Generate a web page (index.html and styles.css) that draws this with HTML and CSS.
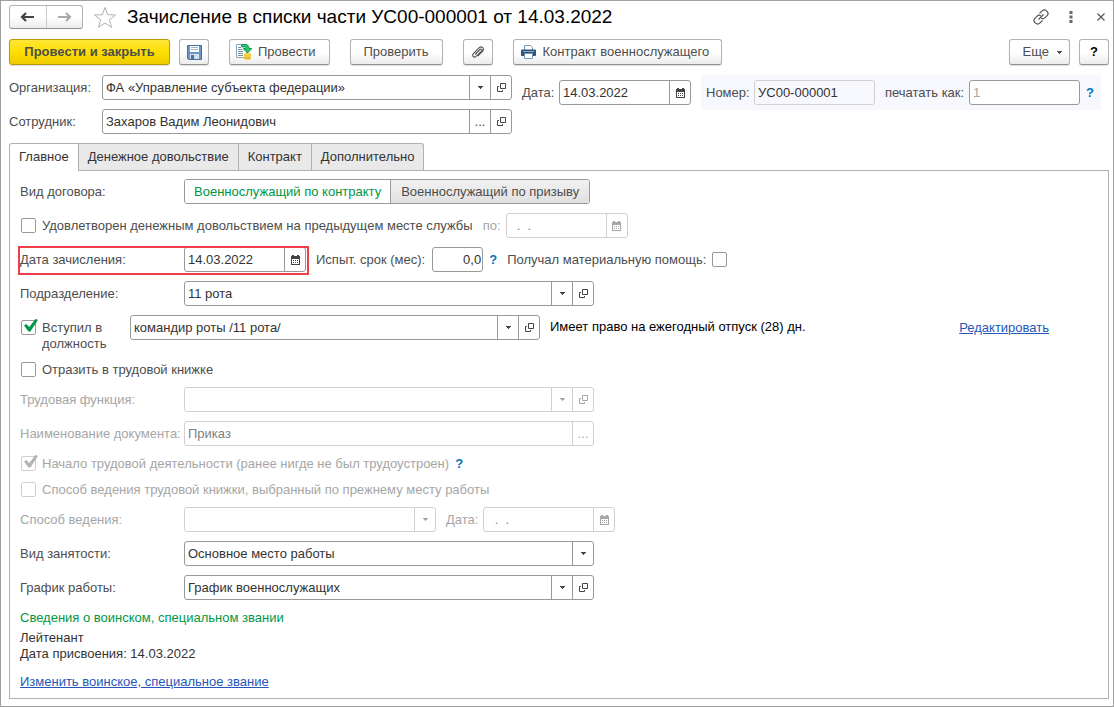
FILE: index.html
```html
<!DOCTYPE html>
<html lang="ru">
<head>
<meta charset="utf-8">
<title>Зачисление в списки части</title>
<link rel="stylesheet" href="styles.css">
</head>
<body>
<svg class="defs" aria-hidden="true">
  <symbol id="i-arrow" viewBox="0 0 5 3"><path d="M0 0h5v1H4v1H3v1H2V2H1V1H0z" fill="currentColor"/></symbol>
  <symbol id="i-open" viewBox="0 0 9 9"><path d="M3.500.5h5v5h-5zM2 3.500H.5v5h5V7" fill="none" stroke="currentColor"/></symbol>
  <symbol id="i-cal" viewBox="0 0 9 10"><path d="M1 0h2v1h3V0h2v1h1v9H0V1h1zM1 4v5h7V4z" fill="currentColor" fill-rule="evenodd"/><path d="M2 5h1v1H2zM4 5h1v1H4zM6 5h1v1H6zM2 7h1v1H2zM4 7h1v1H4zM6 7h1v1H6z" fill="currentColor"/></symbol>
</svg>
<main class="window">
  <header class="titlebar">
    <div class="nav">
      <button class="nav-btn" aria-label="Назад"><svg width="15" height="10" viewBox="0 0 15 10"><path d="M2 5h12M6 1L2 5l4 4" fill="none" stroke="currentColor" stroke-width="2.200"/></svg></button>
      <button class="nav-btn nav-off" aria-label="Вперед" disabled><svg width="15" height="10" viewBox="0 0 15 10"><path d="M1 5h12M9 1l4 4-4 4" fill="none" stroke="currentColor" stroke-width="2.200"/></svg></button>
    </div>
    <button class="icon-btn star" aria-label="В избранное"><svg width="24" height="23" viewBox="0 0 24 23"><path d="M12 1.500l2.700 7.200 7.800.3-6.100 4.800 2.100 7.500L12 17l-6.500 4.300 2.100-7.500L1.500 9l7.800-.3z" fill="#fff" stroke="#a9b1b8"/></svg></button>
    <h1 class="title">Зачисление в списки части УС00-000001 от 14.03.2022</h1>
    <div class="win-tools">
      <button class="icon-btn" aria-label="Ссылка"><svg width="16" height="16" viewBox="0 0 16 16"><path d="M6.500 4.500l2.700-2.700a2.900 2.900 0 0 1 4.200 0l.7.7a2.900 2.900 0 0 1 0 4.100l-2.300 2.300a2.700 2.700 0 0 1-3.500.3M9.500 11.500l-2.700 2.700a2.900 2.900 0 0 1-4.200 0l-.7-.7a2.900 2.900 0 0 1 0-4.100l2.300-2.300a2.700 2.700 0 0 1 3.500-.3M5.500 10.500l5-5" fill="none" stroke="#555" stroke-width="1.200"/></svg></button>
      <button class="icon-btn" aria-label="Меню"><svg width="4" height="12" viewBox="0 0 4 12"><path d="M.5 0h3v3h-3zM.5 4.500h3v3h-3zM.5 9h3v3h-3z" fill="#666"/></svg></button>
      <button class="icon-btn" aria-label="Закрыть"><svg width="8" height="8" viewBox="0 0 8 8"><path d="M.5.5l7 7M7.500.5l-7 7" stroke="#555" stroke-width="1.200"/></svg></button>
    </div>
  </header>

  <div class="toolbar">
    <div class="group">
      <button class="btn primary">Провести и закрыть</button>
      <button class="btn square" aria-label="Записать"><svg width="15" height="15" viewBox="0 0 15 15"><path d="M.5.5h14v14h-13l-1-1z" fill="#6797cc" stroke="#466f9d"/><path d="M3 1h9v6H3z" fill="#fff"/><path d="M4 2.500h7M4 4.500h7" stroke="#a5b1be"/><path d="M3 9h9v5H3z" fill="#d5dde6"/><path d="M4 10h3v4H4z" fill="#466f9d"/></svg></button>
    </div>
    <button class="btn post"><svg width="16" height="16" viewBox="0 0 16 16"><path d="M.5.5h10v13H.5z" fill="#fff" stroke="#8ba3b5"/><path d="M2 3.500h3M2 5.500h4M2 7.500h5M2 9.500h5M2 11.500h5" stroke="#6f8fa6"/><path d="M8 10v4c0 2 7 2 7 0v-4z" fill="#e8b21c"/><path d="M8 12c0 1.500 7 1.500 7 0" fill="none" stroke="#fbe48c"/><ellipse cx="11.500" cy="10.200" rx="3.500" ry="1.500" fill="#f7d24a"/><path d="M5.500.5h3.500c3 0 4 1.500 4 4H16L11.500 9 7 4.500h3c0-1-.4-1.500-1.500-1.500h-3z" fill="#27c46f" stroke="#0b8b48" stroke-width=".8"/></svg>Провести</button>
    <button class="btn">Проверить</button>
    <button class="btn square" aria-label="Файлы"><svg width="14" height="14" viewBox="0 0 14 14"><path d="M4 9.500l5-5c1.300-1.200 2.800.3 1.500 1.600l-5.400 5.300c-2 2-4.800-.8-2.800-2.800L8 2.900c2.700-2.600 6.200.8 3.500 3.500l-4.800 4.800" fill="none" stroke="#555" stroke-width="1.100"/></svg></button>
    <button class="btn print"><svg width="15" height="14" viewBox="0 0 15 14"><path d="M3.500 5V.5h6l2 2V5" fill="#fff" stroke="#7898b3"/><path d="M1 4.500h13q1 0 1 1V10q0 1-1 1H1q-1 0-1-1V5.500q0-1 1-1z" fill="#2c5479"/><path d="M3.500 8.500h8v5h-8z" fill="#fff" stroke="#7898b3"/><path d="M2 6.500h11" stroke="#8bacc8"/></svg>Контракт военнослужащего</button>
    <div class="group push">
      <button class="btn more">Еще<svg width="5" height="3"><use href="#i-arrow"/></svg></button>
      <button class="btn square help">?</button>
    </div>
  </div>

  <section class="head">
    <div class="head-main">
      <div class="row">
        <label class="label" for="org">Организация:</label>
        <div class="field wide"><input id="org" type="text" value="ФА «Управление субъекта федерации»"><button aria-label="Выбрать"><svg class="arr"><use href="#i-arrow"/></svg></button><button aria-label="Открыть"><svg class="ico"><use href="#i-open"/></svg></button></div>
      </div>
      <div class="row">
        <label class="label" for="emp">Сотрудник:</label>
        <div class="field wide"><input id="emp" type="text" value="Захаров Вадим Леонидович"><button aria-label="Выбрать">...</button><button aria-label="Открыть"><svg class="ico"><use href="#i-open"/></svg></button></div>
      </div>
    </div>
    <div class="head-date">
      <label for="date">Дата:</label>
      <div class="field date"><input id="date" type="text" value="14.03.2022"><button aria-label="Календарь"><svg class="cal"><use href="#i-cal"/></svg></button></div>
    </div>
    <div class="number">
      <label class="num-label" for="num">Номер:</label>
      <div class="field num readonly"><input id="num" type="text" value="УС00-000001" readonly></div>
      <label class="as-label" for="as">печатать как:</label>
      <div class="field as"><input id="as" type="text" placeholder="1"></div>
      <button class="hint" aria-label="Справка">?</button>
    </div>
  </section>

  <nav class="tabs" role="tablist">
    <button class="tab active" role="tab" aria-selected="true">Главное</button>
    <button class="tab" role="tab">Денежное довольствие</button>
    <button class="tab" role="tab">Контракт</button>
    <button class="tab" role="tab">Дополнительно</button>
  </nav>

  <section class="panel">
    <div class="row">
      <span class="label">Вид договора:</span>
      <div class="segment" role="radiogroup" aria-label="Вид договора">
        <label class="seg"><input type="radio" name="kind" checked><span>Военнослужащий по контракту</span></label>
        <label class="seg"><input type="radio" name="kind"><span>Военнослужащий по призыву</span></label>
      </div>
    </div>
    <div class="row">
      <label class="check"><input type="checkbox"><span>Удовлетворен денежным довольствием на предыдущем месте службы</span></label>
      <label class="off till-label" for="till">по:</label>
      <div class="field date-s disabled"><input id="till" type="text" value="  .  ." disabled><button aria-label="Календарь" disabled><svg class="cal"><use href="#i-cal"/></svg></button></div>
    </div>
    <div class="row">
      <div class="marked">
        <label class="label" for="enroll">Дата зачисления:</label>
        <div class="field date-s"><input id="enroll" type="text" value="14.03.2022"><button aria-label="Календарь"><svg class="cal"><use href="#i-cal"/></svg></button></div>
      </div>
      <label class="trial-label" for="trial">Испыт. срок (мес):</label>
      <div class="field trial"><input id="trial" type="text" value="0,0"></div>
      <button class="hint" aria-label="Справка">?</button>
      <label class="check reverse"><span>Получал материальную помощь:</span><input type="checkbox"></label>
    </div>
    <div class="row">
      <label class="label" for="dep">Подразделение:</label>
      <div class="field wide"><input id="dep" type="text" value="11 рота"><button aria-label="Выбрать"><svg class="arr"><use href="#i-arrow"/></svg></button><button aria-label="Открыть"><svg class="ico"><use href="#i-open"/></svg></button></div>
    </div>
    <div class="row top">
      <label class="check position"><input type="checkbox" checked><span>Вступил в должность</span></label>
      <div class="field wide"><input type="text" aria-label="Должность" value="командир роты /11 рота/"><button aria-label="Выбрать"><svg class="arr"><use href="#i-arrow"/></svg></button><button aria-label="Открыть"><svg class="ico"><use href="#i-open"/></svg></button></div>
      <p class="vacation">Имеет право на ежегодный отпуск (28) дн.</p>
      <a class="link edit" href="#">Редактировать</a>
    </div>
    <div class="row short">
      <label class="check"><input type="checkbox"><span>Отразить в трудовой книжке</span></label>
    </div>
    <div class="row">
      <label class="label off" for="func">Трудовая функция:</label>
      <div class="field wide disabled"><input id="func" type="text" disabled><button aria-label="Выбрать" disabled><svg class="arr"><use href="#i-arrow"/></svg></button><button aria-label="Открыть" disabled><svg class="ico"><use href="#i-open"/></svg></button></div>
    </div>
    <div class="row">
      <label class="label off" for="doc">Наименование документа:</label>
      <div class="field wide disabled"><input id="doc" type="text" value="Приказ" disabled><button aria-label="Выбрать" disabled>...</button></div>
    </div>
    <div class="row short">
      <label class="check off"><input type="checkbox" checked disabled><span>Начало трудовой деятельности (ранее нигде не был трудоустроен)</span></label>
      <button class="hint" aria-label="Справка">?</button>
    </div>
    <div class="row short">
      <label class="check off"><input type="checkbox" disabled><span>Способ ведения трудовой книжки, выбранный по прежнему месту работы</span></label>
    </div>
    <div class="row">
      <label class="label off" for="way">Способ ведения:</label>
      <div class="field way disabled"><select id="way" disabled><option></option></select><span class="drop"><svg class="arr"><use href="#i-arrow"/></svg></span></div>
      <label class="off till-label" for="waydate">Дата:</label>
      <div class="field date disabled"><input id="waydate" type="text" value="  .  ." disabled><button aria-label="Календарь" disabled><svg class="cal"><use href="#i-cal"/></svg></button></div>
    </div>
    <div class="row">
      <label class="label" for="job">Вид занятости:</label>
      <div class="field wide"><select id="job"><option>Основное место работы</option></select><span class="drop"><svg class="arr"><use href="#i-arrow"/></svg></span></div>
    </div>
    <div class="row">
      <label class="label" for="sched">График работы:</label>
      <div class="field wide"><input id="sched" type="text" value="График военнослужащих"><button aria-label="Выбрать"><svg class="arr"><use href="#i-arrow"/></svg></button><button aria-label="Открыть"><svg class="ico"><use href="#i-open"/></svg></button></div>
    </div>
    <div class="rank">
      <h2 class="rank-title">Сведения о воинском, специальном звании</h2>
      <p>Лейтенант</p>
      <p>Дата присвоения: 14.03.2022</p>
      <a class="link" href="#">Изменить воинское, специальное звание</a>
    </div>
  </section>
</main>
</body>
</html>
```
FILE: styles.css
```css
* { box-sizing: border-box; }
body {
  margin: 0;
  background: #fff;
  color: #4d4d4d;
  font: 13px/16px "Liberation Sans", Arial, sans-serif;
}
button, input, select { font: inherit; color: inherit; margin: 0; }
button { padding: 0; background: none; border: 0; white-space: nowrap; }
h1, h2, p { margin: 0; font-weight: normal; }
.defs { position: absolute; width: 0; height: 0; }

.window {
  display: flex;
  flex-direction: column;
  min-height: 100vh;
  padding: 4px 4px 7px 8px;
  border: 1px solid #a0a0a0;
}

.titlebar { display: flex; align-items: center; height: 24px; }
.nav {
  display: flex;
  width: 74px;
  height: 24px;
  border: 1px solid #b3b3b3;
  border-bottom-color: #8f8f8f;
  border-radius: 3px;
  background: linear-gradient(#fff 50%, #ececec);
}
.nav-btn { flex: 1; display: flex; align-items: center; justify-content: center; color: #444; }
.nav-off { color: #aaa; border-left: 1px solid #ccc; }
.icon-btn { display: flex; align-items: center; justify-content: center; }
.star { margin: 0 10px; }
.title { font-size: 19px; line-height: 24px; color: #000; white-space: nowrap; }
.win-tools { display: flex; align-items: center; gap: 14px; margin-left: auto; }
.win-tools .icon-btn { width: 16px; }

.toolbar { display: flex; gap: 20px; margin-top: 10px; }
.group { display: flex; gap: 9px; }
.push { margin-left: auto; }
.btn {
  display: flex;
  align-items: center;
  justify-content: center;
  height: 26px;
  padding: 0 13px;
  border: 1px solid #b3b3b3;
  border-bottom-color: #8f8f8f;
  border-radius: 3px;
  background: linear-gradient(#fff 50%, #ececec);
  box-shadow: 0 1px 1px #ddd;
  color: #4d4d4d;
}
.primary {
  min-width: 161px;
  border-color: #b39b00;
  background: linear-gradient(#ffe737, #ffdf00 50%, #edcb00);
  font-weight: bold;
}
.square { width: 30px; padding: 0; }
.post { gap: 6px; padding: 0 13px 0 6px; }
.print { gap: 7px; padding: 0 12px 0 7px; }
.more { gap: 8px; padding: 0 7px 0 13px; }
.help { color: #000; font-weight: bold; }

.head { display: flex; align-items: flex-start; margin-top: 10px; }
.head-main { display: flex; flex-direction: column; gap: 9px; }
.head-main .label { width: 93px; }
.head-date { display: flex; align-items: center; justify-content: space-between; width: 169px; margin: 5px 10px; }
.number { display: flex; flex: 1; align-items: center; height: 35px; max-width: 400px; padding: 0 1px 0 5px; background: #f7f8fe; }
.num-label { width: 48px; }
.as-label { width: 84px; margin-left: 10px; }

.row { display: flex; align-items: center; min-height: 25px; }
.label { flex: none; width: 164px; white-space: nowrap; }
.off { color: #a6a6a6; }
.till-label { margin: 0 5px 0 10px; }
.trial-label { margin: 0 7px 0 10px; }

.field {
  display: flex;
  flex: none;
  height: 25px;
  border: 1px solid #999;
  border-radius: 3px;
  background: #fff;
  color: #333;
  overflow: hidden;
}
.field input, .field select {
  flex: 1;
  width: 0;
  padding: 0 3px;
  border: 0;
  outline: 0;
  background: none;
  opacity: 1;
  appearance: none;
}
.field input { white-space: pre; }
.field button, .drop {
  display: flex;
  flex: none;
  align-items: center;
  justify-content: center;
  width: 21px;
  border-left: 1px solid #999;
  color: #444;
}
.field.wide { width: 410px; }
.field.date { width: 132px; }
.field.date-s { width: 122px; }
.field.way { width: 252px; }
.field.trial { width: 51px; }
.field.num { width: 121px; }
.field.as { flex: 1; }
.trial input { padding-right: 1px; text-align: right; }
.as input::placeholder { color: #a6a6a6; opacity: 1; }
.readonly { border-color: #d0d0d0; background: none; }
.field.disabled, .disabled button, .disabled .drop { border-color: #d0d0d0; color: #a6a6a6; }
.disabled input { color: #808080; }
.arr { width: 5px; height: 3px; }
.ico { width: 9px; height: 9px; }
.cal { width: 9px; height: 10px; }
.hint { width: 20px; color: #0072bc; font-weight: bold; text-align: center; }

.tabs { display: flex; margin-top: 9px; }
.tab {
  height: 27px;
  padding: 0 9px;
  border: 1px solid #b0b0b0;
  border-width: 1px 1px 0 0;
  background: #e9e9e9;
  color: #333;
}
.tab:last-child { border-top-right-radius: 3px; }
.tab.active {
  position: relative;
  height: 28px;
  margin-bottom: -1px;
  padding-bottom: 1px;
  border-left-width: 1px;
  border-top-left-radius: 3px;
  background: #fff;
}

.panel {
  display: flex;
  flex: 1;
  flex-direction: column;
  gap: 9px;
  padding: 8px 10px;
  border: 1px solid #b0b0b0;
}
.segment { display: flex; height: 25px; border: 1px solid #999; border-radius: 3px; overflow: hidden; }
.seg { display: flex; }
.seg input { position: absolute; opacity: 0; }
.seg span { display: flex; align-items: center; padding: 0 10px; background: linear-gradient(#f2f2f2, #e0e0e0); }
.seg + .seg { border-left: 1px solid #999; }
.seg input:checked + span { padding: 0 9px; background: #fff; color: #009646; }

.check { display: flex; align-items: center; gap: 6px; padding-left: 1px; }
.check input {
  position: relative;
  flex: none;
  width: 15px;
  height: 15px;
  border: 1px solid #999;
  border-radius: 2px;
  background: #fff;
  appearance: none;
}
.check input:disabled { border-color: #d0d0d0; }
.check input:checked::after {
  content: "";
  position: absolute;
  left: 2px;
  top: -2px;
  width: 14px;
  height: 13px;
  background: #009646;
  clip-path: polygon(0 50%, 16% 38%, 38% 62%, 82% 0, 100% 6%, 46% 96%, 32% 96%);
}
.check input:checked:disabled::after { background: #b3b3b3; }
.check.reverse { padding-left: 4px; }

.marked { display: flex; align-items: center; position: relative; }
.marked::after {
  content: "";
  position: absolute;
  inset: -1px -3px -3px -2px;
  border: 2px solid #ee3f46;
  pointer-events: none;
}
.top { align-items: flex-start; }
.position { align-items: flex-start; width: 110px; padding-top: 5px; }
.position span { width: 70px; }
.vacation { margin: 4px 0 0 10px; color: #000; white-space: nowrap; }
.link { color: #2557b8; text-decoration: underline; }
.edit { margin: 5px 49px 0 auto; }
.row.short { min-height: 17px; }
.rank { display: flex; flex-direction: column; align-items: flex-start; padding-top: 1px; color: #333; }
.rank-title { margin-bottom: 4px; font-size: 13px; line-height: 16px; color: #009646; }
.rank .link { margin-top: 12px; }
```
